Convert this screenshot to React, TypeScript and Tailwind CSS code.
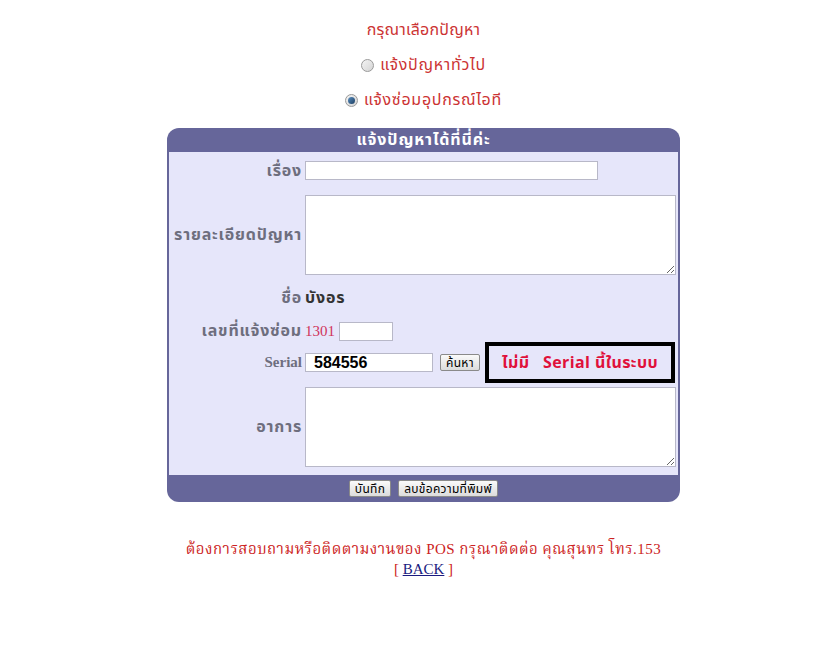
import React from 'react';

// ---------------------------------------------------------------------------
// Small pieces
// ---------------------------------------------------------------------------

const THAI = "font-['Tahoma','Noto_Sans_Thai','Noto_Sans','DejaVu_Sans',sans-serif]";
const SERIF = "font-['Liberation_Serif','Noto_Serif_Thai','Noto_Sans',serif]";

function Radio({ checked }: { checked?: boolean }) {
  return (
    <span className="inline-flex w-[13px] h-[13px] rounded-full border border-[#9a9a9a] bg-gradient-to-br from-[#f4f4f4] to-[#d4d4d4] items-center justify-center shrink-0">
      {checked && <span className="w-[7px] h-[7px] rounded-full bg-gradient-to-br from-[#5a8fc0] to-[#1d3f63]" />}
    </span>
  );
}

function Label({ children }: { children: React.ReactNode }) {
  return (
    <div className={`w-[136px] shrink-0 pr-[3px] text-right text-[16px] tracking-[0.8px] font-bold text-[#6e6e7e] ${THAI}`}>
      {children}
    </div>
  );
}

function OldButton({ children }: { children: React.ReactNode }) {
  return (
    <button className={`h-[17px] px-[5px] border border-[#8a8a8a] rounded-[2px] bg-gradient-to-b from-[#fafafa] to-[#dcdcdc] text-[12px] tracking-[0.3px] leading-[14px] text-black ${THAI}`}>
      {children}
    </button>
  );
}

// ---------------------------------------------------------------------------
// Main
// ---------------------------------------------------------------------------

export default function App() {
  return (
    <div className="w-[818px] h-[655px] bg-white overflow-hidden">
      <div className="ml-[167px] w-[513px] flex flex-col items-center">
        {/* Problem type */}
        <div className={`mt-[19px] h-[22px] leading-[22px] text-[16px] tracking-[0.2px] text-[#cc3333] ${THAI}`}>กรุณาเลือกปัญหา</div>
        <div className={`mt-[13px] h-[22px] flex items-center gap-[6px] text-[16px] tracking-[0.7px] text-[#cc3333] ${THAI}`}>
          <Radio />
          <span>แจ้งปัญหาทั่วไป</span>
        </div>
        <div className={`mt-[13px] h-[22px] flex items-center gap-[6px] text-[16px] tracking-[0.7px] text-[#cc3333] ${THAI}`}>
          <Radio checked />
          <span>แจ้งซ่อมอุปกรณ์ไอที</span>
        </div>

        {/* Form */}
        <div className="mt-[17px] w-[513px] rounded-[12px] overflow-hidden bg-[#66669a] px-[2px]">
          <div className={`h-[24px] flex items-center justify-center text-white font-bold text-[16px] tracking-[0.9px] ${THAI}`}>
            แจ้งปัญหาได้ที่นี่ค่ะ
          </div>
          <div className="bg-[#e6e6fa] flex flex-col">
            <div className="h-[37px] flex items-center">
              <Label>เรื่อง</Label>
              <input className="w-[293px] h-[19px] bg-white border border-[#b8b8c8] outline-none" />
            </div>
            <div className="h-[91px] flex items-center">
              <Label>รายละเอียดปัญหา</Label>
              <textarea className="w-[371px] h-[80px] bg-white border border-[#b8b8c8] outline-none resize-y" />
            </div>
            <div className="h-[36px] flex items-center">
              <div className={`w-[136px] shrink-0 pr-[3px] text-right text-[16px] tracking-[0.8px] font-bold text-[#6e6e7e] ${THAI}`}>ชื่อ</div>
              <span className={`text-[16px] tracking-[0.8px] font-bold text-[#333333] ${THAI}`}>บังอร</span>
            </div>
            <div className="h-[30px] flex items-center">
              <Label>เลขที่แจ้งซ่อม</Label>
              <span className={`text-[15px] text-[#d0335a] ${SERIF}`}>1301</span>
              <input className="ml-[4px] w-[54px] h-[19px] bg-white border border-[#b8b8c8] outline-none" />
            </div>
            <div className="h-[33px] flex items-center">
              <div className={`w-[136px] shrink-0 pr-[3px] text-right text-[15px] font-bold text-[#6e6e7e] ${SERIF}`}>Serial</div>
              <input
                defaultValue="584556"
                className="w-[128px] h-[19px] bg-white border border-[#b8b8c8] outline-none px-[8px] text-[16px] font-bold text-black font-['Liberation_Sans',Arial,sans-serif]"
              />
              <span className="ml-[7px] w-[39px] flex">
                <OldButton>ค้นหา</OldButton>
              </span>
              <div className="ml-[6px] w-[190px] h-[41px] shrink-0 border-[4px] border-black flex items-center justify-center">
                <span className={`text-[16px] tracking-[0.4px] font-bold text-[#e0103a] whitespace-pre ${THAI}`}>ไม่มี   Serial นี้ในระบบ</span>
              </div>
            </div>
            <div className="h-[96px] flex items-center">
              <Label>อาการ</Label>
              <textarea className="w-[371px] h-[80px] bg-white border border-[#b8b8c8] outline-none resize-y" />
            </div>
          </div>
          <div className="h-[27px] flex items-center justify-center gap-[7px]">
            <OldButton>บันทึก</OldButton>
            <OldButton>ลบข้อความที่พิมพ์</OldButton>
          </div>
        </div>

        {/* Footer note */}
        <div className={`mt-[37px] w-[560px] text-center text-[15px] tracking-[0.45px] leading-[20px] text-[#cc2222] ${SERIF}`}>
          ต้องการสอบถามหรือติดตามงานของ POS กรุณาติดต่อ คุณสุนทร โทร.153
        </div>
        <div className={`text-[15px] leading-[20px] text-[#cc2222] ${SERIF}`}>
          [ <a href="#" className="underline text-[#1a1a80]">BACK</a> ]
        </div>
      </div>
    </div>
  );
}
